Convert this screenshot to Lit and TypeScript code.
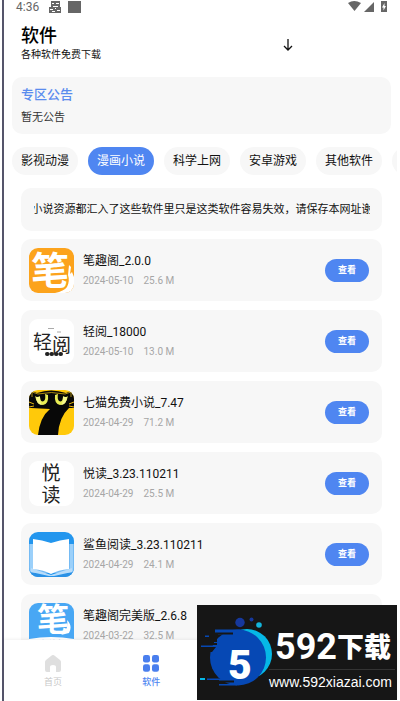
import { LitElement, html, svg, css } from "lit";
import { customElement, property, state } from "lit/decorators.js";
import { classMap } from "lit/directives/class-map.js";

interface AppEntry {
  name: string;
  date: string;
  size: string;
  art: string;
}

const ART: Record<string, unknown> = {
  biquge: svg`
    <rect width="45" height="45" fill="#fca31c"/>
    <text class="brush" x="21" y="36" text-anchor="middle" font-size="38" fill="#fff">笔</text>
    <path fill="#fff" d="M40 17l2 2-1 7 2-2 2 5v16H26q9-2 12-6 3-6 1-12z"/>`,
  qingyue: svg`
    <rect width="45" height="45" fill="#fff"/>
    <text class="kai" x="4" y="30" font-size="19" fill="#222">轻</text>
    <text class="kai" x="23" y="33" font-size="19" fill="#222">阅</text>
    <path d="M19 9.500h6M28 13h4" stroke="#aaa" stroke-width="1"/>
    <path d="M18 35h14" stroke="#222" stroke-width="4" stroke-linecap="round" stroke-dasharray="0.500 4"/>`,
  qimao: svg`
    <rect width="45" height="45" fill="#ffc90a"/>
    <path fill="#080808" d="M0 3l3-2 5 2Q22-2 37 3l5-2 3 2v15h-5Q30 27 29 45H9Q11 27 21 19L2 18H0z"/>
    <path d="M3 7V2l6 2Q22 1 36 4l6-2v5" fill="none" stroke="#a88a12" stroke-width="1"/>
    <path fill="#e9ed55" d="M6 6q2 9 8 9 6-1 5-10l-3-1q1 5-1 7-4 2-4-5-3 2-5 0zM39 6q-2 9-8 9-6-1-5-10l3-1q-1 5 1 7 4 2 4-5 3 2 5 0z"/>
    <path fill="#f7f78b" d="M7 7q0 7 6 8-2-2-2-8zM38 7q0 7-6 8 2-2 2-8z"/>
    <path d="M0 12l5 2M0 17l5-1M45 12l-5 2M45 17l-5-1" stroke="#e9b910" stroke-width="1"/>`,
  yuedu: svg`
    <rect width="45" height="45" fill="#fff"/>
    <text class="kai" x="22" y="19" text-anchor="middle" font-size="19" fill="#222">悦</text>
    <text class="kai" x="22" y="41" text-anchor="middle" font-size="19" fill="#222">读</text>`,
  shayu: svg`
    <rect width="45" height="45" fill="#2396ee"/>
    <path fill="#75bbf4" d="M0 12h45v29H0z"/>
    <path fill="#9bd0fa" d="M1 12h3v27H1zM41 12h3v27h-3z"/>
    <path fill="#2b91e5" d="M0 40l6 1 16 4 17-4 6-1v6H0z"/>
    <path fill="#b8dcfa" d="M2 36l20 7 21-7v4l-18 4h-5L2 40z"/>
    <path fill="#fff" d="M4 7q9 1 18 4 9-3 18-4v30q-11 1-18 5-7-4-18-5z"/>`,
  wanmei: svg`
    <rect width="45" height="45" fill="#48a7f4"/>
    <text class="brush" x="24" y="28" text-anchor="middle" font-size="32" fill="#fff">笔</text>
    <path fill="#fff" d="M38 17q6 6 2 13l-8 2q8-5 6-15zM0 36q22-4 45 0v9H0z"/>
    <text class="brush" x="23" y="45" text-anchor="middle" font-size="9" fill="#2c8ce0">完美版</text>`,
};

@customElement("app-card")
class AppCard extends LitElement {
  @property({ attribute: false }) entry!: AppEntry;

  static styles = css`
    :host {
      display: flex;
      align-items: center;
      gap: 9px;
      box-sizing: border-box;
      height: 62px;
      padding: 0 13px 0 8px;
      border-radius: 10px;
      background: #f7f7f7;
      flex: none;
    }
    .art {
      width: 45px;
      height: 45px;
      border-radius: 9px;
      flex: none;
    }
    .brush {
      font-family: "Noto Sans CJK SC", sans-serif;
      font-weight: 700;
    }
    .kai {
      font-family: "Noto Sans CJK SC", sans-serif;
      font-weight: 400;
    }
    .info {
      flex: 1;
      min-width: 0;
    }
    .name {
      margin: 0 0 2px;
      font-size: 12px;
      line-height: 20px;
      font-weight: 400;
      color: #111;
      white-space: nowrap;
    }
    .meta {
      display: flex;
      gap: 10px;
      font-size: 10px;
      line-height: 16px;
      color: #a6a6a6;
    }
    .view {
      width: 44px;
      height: 23px;
      padding: 0;
      border: 0;
      border-radius: 12px;
      background: #4f86f1;
      color: #fff;
      font: 700 9px/23px Roboto, "Noto Sans CJK SC", sans-serif;
    }
  `;

  render() {
    const { name, date, size, art } = this.entry;
    return html`
      <svg class="art" viewBox="0 0 45 45" aria-hidden="true">${ART[art]}</svg>
      <div class="info">
        <h2 class="name">${name}</h2>
        <div class="meta"><span>${date}</span><span>${size}</span></div>
      </div>
      <button class="view">查看</button>
    `;
  }
}

@customElement("site-badge")
class SiteBadge extends LitElement {
  static styles = css`
    :host {
      display: grid;
      grid-template-columns: 72px 1fr;
      width: 200px;
      height: 95px;
      background: #161616;
      color: #fff;
      overflow: hidden;
    }
    .mark {
      width: 76px;
      height: 95px;
    }
    .five {
      font: 900 41px Roboto, sans-serif;
    }
    .words {
      display: flex;
      flex-direction: column;
      padding-top: 22px;
      white-space: nowrap;
    }
    .brand {
      display: flex;
      align-items: flex-start;
      height: 42px;
      padding-left: 6px;
      border-bottom: 1px solid #333;
      margin-right: 2px;
    }
    .digits {
      font: 700 36px/40px Roboto, sans-serif;
    }
    .han {
      font: 900 27px/38px "Noto Sans CJK SC", sans-serif;
    }
    .url {
      font: 14px/20px "Liberation Sans", sans-serif;
      margin-top: 2px;
    }
  `;

  render() {
    return html`
      <svg class="mark" viewBox="0 0 76 95" aria-hidden="true">
        <circle cx="43" cy="17.500" r="4.700" fill="#16389c"/>
        <circle cx="54.500" cy="14.500" r="2" fill="#16389c"/>
        <circle cx="62" cy="20" r="2.800" fill="#13b5dc"/>
        <circle cx="50" cy="49" r="25" fill="#06b8e6"/>
        <g fill="#0648b4">
          <circle cx="41" cy="52.500" r="28"/>
          <path d="M18 24.500h27v8H30v-3H18zM8 30.500h12v1.500H8zM17 34h18v8H4v-1.500h17V38h-4zM10 73.500h30v7H22V79h15v-2H22v-2H10z"/>
        </g>
        <path fill="#161616" d="M12 27.500h24v2H21v3h-9zM12 33h8v4h-8zM12 38h8v2h-8zM12 42h7l-4 5h-3zM14 75.500h23v2H14z"/>
        <path d="M3 74h5" stroke="#06b8e6" stroke-width="2"/>
        <text class="five" x="43" y="74" text-anchor="middle" fill="#fff">5</text>
      </svg>
      <div class="words">
        <div class="brand"><span class="digits">592</span><span class="han">下载</span></div>
        <span class="url">www.592xiazai.com</span>
      </div>
    `;
  }
}

@customElement("app-root")
class AppRoot extends LitElement {
  @state() private active = 1;

  private categories = ["影视动漫", "漫画小说", "科学上网", "安卓游戏", "其他软件", "系统工具"];

  private entries: AppEntry[] = [
    { name: "笔趣阁_2.0.0", date: "2024-05-10", size: "25.6 M", art: "biquge" },
    { name: "轻阅_18000", date: "2024-05-10", size: "13.0 M", art: "qingyue" },
    { name: "七猫免费小说_7.47", date: "2024-04-29", size: "71.2 M", art: "qimao" },
    { name: "悦读_3.23.110211", date: "2024-04-29", size: "25.5 M", art: "yuedu" },
    { name: "鲨鱼阅读_3.23.110211", date: "2024-04-29", size: "24.1 M", art: "shayu" },
    { name: "笔趣阁完美版_2.6.8", date: "2024-03-22", size: "32.5 M", art: "wanmei" },
  ];

  static styles = css`
    :host {
      display: flex;
      flex-direction: column;
      position: relative;
      box-sizing: border-box;
      height: 100vh;
      overflow: hidden;
      padding: 0 3px 0 2px;
      background: #fff;
      color: #111;
      font-family: Roboto, "Noto Sans CJK SC", sans-serif;
    }
    .screen {
      display: flex;
      flex-direction: column;
      flex: 1;
      min-height: 0;
      border-left: 2px solid #55556b;
    }
    .status {
      display: flex;
      align-items: center;
      height: 14px;
      padding: 0 10px 0 12px;
      color: #666;
      font-size: 12px;
      line-height: 14px;
      flex: none;
    }
    .notes {
      flex: 1;
      height: 14px;
      margin-left: 10px;
    }
    .signals {
      width: 40px;
      height: 14px;
    }
    .header {
      display: flex;
      align-items: center;
      justify-content: space-between;
      padding: 10px 103px 15px 17px;
    }
    .title {
      margin: 0;
      font-size: 18px;
      line-height: 24px;
      font-weight: 500;
      color: #000;
    }
    .subtitle {
      margin: 0;
      font-size: 10px;
      line-height: 14px;
    }
    .sort {
      display: flex;
      padding: 4px 0 0;
      border: 0;
      background: none;
    }
    .arrow {
      width: 12px;
      height: 12px;
    }
    .notice {
      margin: 0 6px 0 8px;
      padding: 8px 9px;
      border-radius: 10px;
      background: #f7f7f7;
    }
    .notice-title {
      margin: 0 0 5px;
      font-size: 13px;
      line-height: 20px;
      font-weight: 500;
      color: #5a8cee;
    }
    .notice-text {
      margin: 0;
      font-size: 11px;
      line-height: 16px;
      color: #333;
    }
    .chips {
      display: flex;
      gap: 10px;
      margin: 13px 0;
      padding-left: 8px;
      overflow: hidden;
      flex: none;
    }
    .chip {
      flex: none;
      height: 28px;
      padding: 0 9px;
      border: 0;
      border-radius: 14px;
      background: #f7f7f7;
      color: #111;
      font: 12px/28px Roboto, "Noto Sans CJK SC", sans-serif;
    }
    .chip.on {
      background: #4f86f1;
      color: #fff;
    }
    .marquee {
      margin: 0 15px 8px 17px;
      padding: 0 12px 0 13px;
      border-radius: 10px;
      background: #f7f7f7;
      flex: none;
    }
    .track {
      display: flex;
      justify-content: center;
      overflow: hidden;
      white-space: nowrap;
      font-size: 11px;
      line-height: 43px;
    }
    .list {
      display: flex;
      flex-direction: column;
      gap: 9px;
      flex: 1;
      min-height: 0;
      overflow: hidden;
      padding: 0 15px 0 17px;
    }
    .tabs {
      display: grid;
      grid-template-columns: repeat(4, 1fr);
      height: 61px;
      background: #fff;
      box-shadow: 0 -1px 3px rgba(0, 0, 0, 0.06);
      flex: none;
      z-index: 1;
    }
    .tab {
      display: flex;
      flex-direction: column;
      align-items: center;
      gap: 3px;
      padding-top: 15px;
      color: #c8c8c8;
      font-size: 9px;
      line-height: 14px;
      text-decoration: none;
    }
    .tab.current {
      color: #4f86f1;
      font-weight: 500;
    }
    .glyph {
      width: 18px;
      height: 17px;
    }
    .badge {
      position: absolute;
      right: 3px;
      bottom: 1px;
      z-index: 2;
    }
  `;

  render() {
    return html`
      <main class="screen">
        <div class="status">
          <span>4:36</span>
          <svg class="notes" viewBox="0 0 40 14" preserveAspectRatio="xMinYMid meet" aria-hidden="true">
            <path fill="#666" d="M2 1h9v6h1v6H0V7h2zM19 1h13v12H19z"/>
            <path fill="none" stroke="#fff" d="M3 3.500h2M7 3.500h3M4 6.500h5M1 9.500h3M6 8.500h1M8 10.500h3M3 11.500h3"/>
          </svg>
          <svg class="signals" viewBox="0 0 40 14" aria-hidden="true">
            <g fill="#666">
              <path d="M1 3q6-4 13 0L7.500 11z"/>
              <path d="M27 2v10H17z"/>
              <path d="M34 1h6v11h-6z"/>
            </g>
            <path fill="#fff" d="M37.500 3v3h1.500l-2.500 4.500V7.500H35z"/>
          </svg>
        </div>

        <header class="header">
          <div>
            <h1 class="title">软件</h1>
            <p class="subtitle">各种软件免费下载</p>
          </div>
          <button class="sort" aria-label="下载">
            <svg class="arrow" viewBox="0 0 12 12" aria-hidden="true">
              <path d="M6 0v11M2 7l4 4 4-4" fill="none" stroke="#111" stroke-width="1.300"/>
            </svg>
          </button>
        </header>

        <section class="notice">
          <h2 class="notice-title">专区公告</h2>
          <p class="notice-text">暂无公告</p>
        </section>

        <nav class="chips">
          ${this.categories.map(
            (label, i) => html`<button
              class=${classMap({ chip: true, on: i === this.active })}
              @click=${() => (this.active = i)}
            >${label}</button>`
          )}
        </nav>

        <div class="marquee">
          <div class="track">小说资源都汇入了这些软件里只是这类软件容易失效，请保存本网址谢</div>
        </div>

        <section class="list">
          ${this.entries.map((entry) => html`<app-card .entry=${entry}></app-card>`)}
        </section>

        <nav class="tabs">
          <a class="tab" href="#home">
            <svg class="glyph" viewBox="0 0 18 17" aria-hidden="true">
              <path fill="#dfdfdf" d="M9 0q1 0 2 1l5 4q1 1 1 2v8q0 2-2 2h-3v-5q0-2-3-2t-3 2v5H3q-2 0-2-2V7q0-1 1-2l5-4q1-1 2-1z"/>
            </svg>
            <span>首页</span>
          </a>
          <a class="tab current" href="#apps">
            <svg class="glyph" viewBox="0 0 18 17" aria-hidden="true">
              <g fill="#4a7fee">
                <rect x="1" y="0" width="7" height="7.500" rx="2.200"/>
                <rect x="10" y="0" width="7" height="7.500" rx="2.200"/>
                <rect x="1" y="9.300" width="7" height="7.500" rx="2.200"/>
                <rect x="10" y="9.300" width="7" height="7.500" rx="2.200"/>
              </g>
            </svg>
            <span>软件</span>
          </a>
        </nav>
      </main>
      <site-badge class="badge"></site-badge>
    `;
  }
}
